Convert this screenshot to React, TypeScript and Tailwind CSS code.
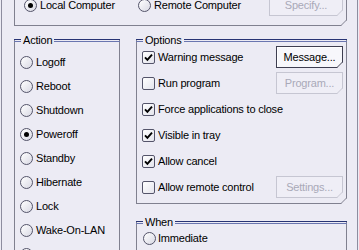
import React from "react";

const Chamfer = ({ color }: { color: string }) => (
  <svg className="absolute right-[-1px] bottom-[-1px]" width="6" height="6" viewBox="0 0 6 6">
    <polygon points="6,0 6,6 0,6" fill="#ecebf4" />
    <line x1="0" y1="5.5" x2="5.5" y2="0" stroke={color} strokeWidth="1" />
  </svg>
);

const Btn = ({ label, disabled, w = "w-[67px]" }: { label: string; disabled?: boolean; w?: string }) => (
  <div
    className={`relative ${w} h-[22px] shrink-0 flex items-center justify-center border ${
      disabled
        ? "border-[#c6c6d2] text-[#a9a9b8] bg-[#efeef6]"
        : "border-[#3e3e50] text-black bg-[#f7f7fb] shadow-[inset_1px_1px_0_#fff]"
    }`}
  >
    {label}
    <Chamfer color={disabled ? "#c6c6d2" : "#3e3e50"} />
  </div>
);

const Radio = ({ checked }: { checked?: boolean }) => (
  <div className="w-[13px] h-[13px] shrink-0 rounded-full border border-[#54546a] bg-linear-to-br from-white to-[#d9d9e4] flex items-center justify-center">
    {checked && <div className="w-[5px] h-[5px] rounded-full bg-black" />}
  </div>
);

const Check = ({ checked }: { checked?: boolean }) => (
  <div className="w-[13px] h-[13px] shrink-0 rounded-[2px] border border-[#54546a] bg-linear-to-br from-white to-[#e4e4ec] flex items-center justify-center">
    {checked && (
      <svg width="9" height="9" viewBox="0 0 9 9">
        <path d="M1 4.3 L3.4 6.8 L8 1.6" stroke="#000" strokeWidth="1.9" fill="none" />
      </svg>
    )}
  </div>
);

const Dbl = ({ className }: { className: string }) => (
  <div className={`h-[3px] border-t border-b border-t-[#283474] border-b-[#6a76b0] ${className}`} />
);

const Header = ({ title }: { title: string }) => (
  <div className="-mx-px -mt-[4px] h-[9px] flex items-center">
    <Dbl className="w-[7px]" />
    <span className="px-[2px] leading-none">{title}</span>
    <Dbl className="flex-1" />
  </div>
);

const actions = ["Logoff", "Reboot", "Shutdown", "Poweroff", "Standby", "Hibernate", "Lock", "Wake-On-LAN", "Custom"];

const options = [
  { label: "Warning message", checked: true, btn: "Message..." },
  { label: "Run program", checked: false, btn: "Program...", off: true },
  { label: "Force applications to close", checked: true },
  { label: "Visible in tray", checked: true },
  { label: "Allow cancel", checked: true },
  { label: "Allow remote control", checked: false, btn: "Settings...", off: true },
];

export default function App() {
  return (
    <div className="w-[359px] h-[250px] overflow-hidden bg-[#ecebf4] text-[11px] tracking-[-0.2px] text-black font-['Liberation_Sans',Arial,sans-serif]">
      <div className="ml-px w-[357px] h-full border-x border-[#8d8d9f] pl-[12px] flex flex-col">
        {/* target computer */}
        <div className="relative -mt-[6px] w-[333px] shrink-0 border-x border-b border-[#80808f] flex items-center pl-[9px] pr-[3px] pb-[9px]">
          <div className="w-[114px] flex items-center gap-[3px]">
            <Radio checked />
            <span>Local Computer</span>
          </div>
          <div className="flex items-center gap-[3px]">
            <Radio />
            <span>Remote Computer</span>
          </div>
          <div className="ml-auto">
            <Btn label="Specify..." disabled w="w-[74px]" />
          </div>
          <Chamfer color="#80808f" />
        </div>

        <div className="mt-[14px] flex gap-[16px] items-start">
          {/* Action */}
          <div className="w-[106px] shrink-0 h-[260px] border-x border-b border-[#80808f] flex flex-col">
            <Header title="Action" />
            <div className="mt-[5px] pl-[5px] flex flex-col">
              {actions.map((a, i) => (
                <div key={a} className="h-[24px] flex items-center gap-[3px]">
                  <Radio checked={i === 3} />
                  <span className="whitespace-nowrap">{a}</span>
                </div>
              ))}
            </div>
          </div>

          <div className="w-[211px] shrink-0 flex flex-col">
            {/* Options */}
            <div className="relative border-x border-b border-[#80808f] flex flex-col pb-[3px]">
              <Header title="Options" />
              <div className="-mt-px pl-[5px] pr-[3px] flex flex-col">
                {options.map((o) => (
                  <div key={o.label} className="h-[26px] flex items-center gap-[3px]">
                    <Check checked={o.checked} />
                    <span className="whitespace-nowrap">{o.label}</span>
                    {o.btn && (
                      <div className="ml-auto">
                        <Btn label={o.btn} disabled={o.off} />
                      </div>
                    )}
                  </div>
                ))}
              </div>
              <Chamfer color="#80808f" />
            </div>

            {/* When */}
            <div className="mt-[18px] h-[60px] border-x border-b border-[#80808f] flex flex-col">
              <Header title="When" />
              <div className="-mt-px pl-[6px] flex flex-col">
                <div className="h-[24px] flex items-center gap-[2px]">
                  <Radio />
                  <span>Immediate</span>
                </div>
              </div>
            </div>
          </div>
        </div>
      </div>
    </div>
  );
}
